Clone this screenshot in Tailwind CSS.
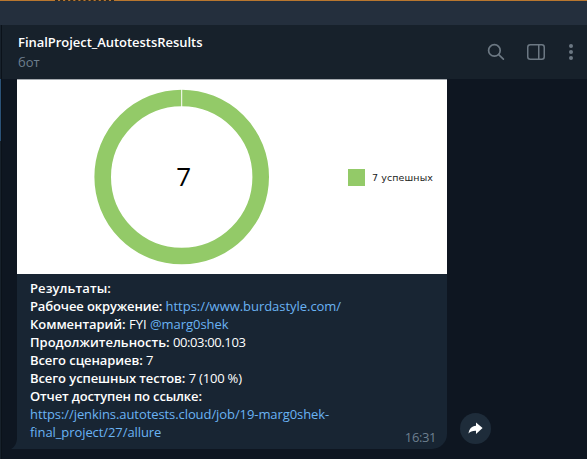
<!DOCTYPE html>
<html lang="ru">
<head>
<meta charset="utf-8">
<title>FinalProject_AutotestsResults</title>
<script src="https://cdn.jsdelivr.net/npm/@tailwindcss/browser@4"></script>
</head>
<body class="w-[587px] h-[459px] overflow-hidden bg-[#0e1621] flex flex-col font-['Open_Sans','Noto_Sans',sans-serif] text-[13px] leading-[18px] text-white">
  <div class="h-px shrink-0 bg-[#b9772f] flex"><div class="ml-[55px] w-[59px] border-t border-dashed border-[#30291f]"></div></div>
  <div class="h-6 shrink-0 bg-[#242f3d]"></div>
  <div class="flex-1 flex min-h-0">
    <div class="w-px shrink-0 bg-[#17212b] pt-[54px]"><div class="h-[62px] bg-[#2b5278]"></div></div>
    <div class="w-px shrink-0 bg-[#0b121a]"></div>
    <div class="flex-1 flex flex-col">
      <header class="h-[54px] shrink-0 bg-[#17212b] flex justify-between pl-4">
        <div class="pt-2">
          <div class="font-semibold whitespace-nowrap h-5 tracking-[-0.04px]">FinalProject_AutotestsResults</div>
          <div class="text-[#6d7f8f]">бот</div>
        </div>
        <div class="flex items-center h-[54px] pr-[14px]">
          <svg class="w-[18px] h-[18px]" viewBox="0 0 18 18" fill="none" stroke="#6c7883" stroke-width="1.7" stroke-linecap="round"><circle cx="7.4" cy="7.4" r="5.8"/><path d="M11.7 11.7L16.4 16.2"/></svg>
          <svg class="w-[18px] h-4 ml-[22px]" viewBox="0 0 18 16" fill="none" stroke="#6c7883" stroke-width="1.5"><rect x=".75" y=".75" width="16.5" height="14.5" rx="2.5"/><path d="M11.75 1v14"/></svg>
          <svg class="w-1 h-4 ml-6" viewBox="0 0 4 16" fill="#6c7883"><circle cx="2" cy="2" r="2"/><circle cx="2" cy="8" r="2"/><circle cx="2" cy="14" r="2"/></svg>
        </div>
      </header>
      <main class="flex-1 flex items-end pl-[9px] pb-[10px] min-h-0">
        <svg class="w-1.5 h-[14px] shrink-0" viewBox="0 0 6 14" fill="#182533"><path d="M6 0v14H0C3.5 12 6 8 6 3z"/></svg>
        <article class="w-[430px] h-[370px] shrink-0 bg-[#182533] rounded-br-[15px] overflow-hidden flex flex-col">
          <div class="h-[195px] shrink-0 bg-white border-t border-[#a6abb0] flex text-black">
            <svg class="w-[330px] h-[194px]" viewBox="0 0 330 194"><circle cx="164.7" cy="97" r="79" fill="none" stroke="#93ca68" stroke-width="16.6"/><path d="M164.7 9v19" stroke="#fff" stroke-width="1"/><text x="166.7" y="106" text-anchor="middle" font-family="Open Sans" font-size="26">7</text></svg>
            <div class="flex items-center h-[194px]">
              <div class="w-[17px] h-[17px] bg-[#93ca68] ml-[1px]"></div>
              <div class="ml-[7px] text-[9.5px] leading-[14px] tracking-[0.1px] whitespace-nowrap font-['DejaVu_Sans',sans-serif] text-[#222] pt-0.5">7 успешных</div>
            </div>
          </div>
          <div class="flex-1 flex pl-[13px] pr-[11px] pt-[5px]">
            <div class="flex-1 whitespace-nowrap">
              <p><b class="font-semibold tracking-[0.1px]">Результаты:</b></p>
              <p><b class="font-semibold tracking-[-0.13px]">Рабочее окружение:</b> <a class="text-[#6ab3f3] tracking-[-0.04px]">https://www.burdastyle.com/</a></p>
              <p><b class="font-semibold tracking-[-0.05px]">Комментарий:</b> FYI <a class="text-[#6ab3f3] tracking-[-0.05px]">@marg0shek</a></p>
              <p><b class="font-semibold">Продолжительность:</b> <span class="tracking-[-0.38px]">00:03:00.103</span></p>
              <p><b class="font-semibold tracking-[-0.08px]">Всего сценариев:</b> 7</p>
              <p><b class="font-semibold tracking-[-0.08px]">Всего успешных тестов:</b> <span class="tracking-[-0.2px]">7 (100 %)</span></p>
              <p><b class="font-semibold tracking-[-0.15px]">Отчет доступен по ссылке:</b></p>
              <p class="text-[#6ab3f3]"><span class="tracking-[-0.08px]">https://jenkins.autotests.cloud/job/19-marg0shek-</span><br><span class="tracking-[-0.08px]">final_project/27/allure</span></p>
            </div>
            <time class="self-end text-[#6d7f8f] pb-[3px] tracking-[-0.4px]">16:31</time>
          </div>
        </article>
        <div class="w-[31px] h-[31px] ml-[13px] mb-[5px] rounded-full bg-[#1e2c3a] flex items-center justify-center">
          <svg class="w-[15px] h-[13px]" viewBox="0 0 15 13" fill="#fff"><path d="M8 .5L14.6 6 8 12V8.7C4.5 8.6 2.3 9.3.5 11.6 1 7 3.5 4 8 3.7z"/></svg>
        </div>
      </main>
    </div>
  </div>
</body>
</html>
